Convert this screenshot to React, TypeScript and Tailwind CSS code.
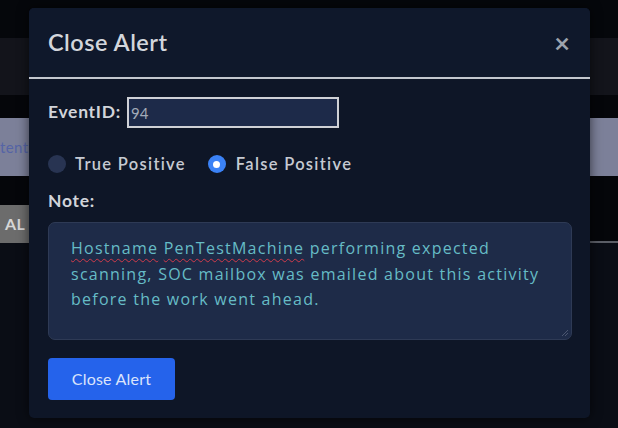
import { useState } from 'react';

// Backdrop strips peek out on both sides of the dialog
function Backdrop() {
  return (
    <div className="flex flex-col h-full">
      <div className="h-[38px] bg-[#05070b]" />
      <div className="h-[57px] bg-[#13141b]" />
      <div className="h-[23px] bg-[#05060a]" />
      <div className="h-[58px] bg-[#7c8099] flex items-center">
        <span className="text-[15px] text-[#5564a6] tracking-wide">tent</span>
      </div>
      <div className="h-[29px] bg-[#05060a]" />
      <div className="h-[38px] flex">
        <div className="w-[60px] bg-[#6c6c6c] flex items-center pl-[5px]">
          <span className="text-[16px] font-bold text-[#d6d6d6] tracking-wide">AL</span>
        </div>
        <div className="flex-1 bg-[#05060a] border-b-2 border-[#5b5e66]" />
      </div>
      <div className="flex-1 bg-[#0a0d15]" />
    </div>
  );
}

const squiggle = 'underline decoration-wavy decoration-[#d13b4b] decoration-1 underline-offset-[4px]';

export default function App() {
  const [verdict, setVerdict] = useState<'tp' | 'fp'>('fp');

  return (
    <div className="relative w-[618px] h-[428px] overflow-hidden bg-[#05070b] font-['Lato','Noto_Sans',sans-serif]">
      <Backdrop />

      <div className="absolute left-[29px] top-[8px] w-[561px] h-[410px] rounded-[5px] bg-[#0e1627] shadow-[0_0_12px_rgba(0,0,0,0.6)] flex flex-col">
        <div className="h-[69px] flex items-center justify-between pl-[19px] pr-[20px] bg-[#0f182b] rounded-t-[5px]">
          <h2 className="text-[23.5px] font-semibold text-[#d3d6dc] tracking-[0.5px]">Close Alert</h2>
          <button className="text-[27px] leading-none font-bold text-[#9da3ad]">×</button>
        </div>
        <div className="h-[2px] bg-[#c3c7cf]" />

        <div className="flex flex-col pl-[19px] pr-[18px] pt-[18px]">
          <div className="flex items-center gap-[6px]">
            <label htmlFor="eventid" className="text-[17.5px] font-bold text-[#d1d4da] tracking-[0.7px]">EventID:</label>
            <input
              id="eventid"
              defaultValue="94"
              className="w-[212px] h-[31px] bg-[#1d2a49] border-2 border-[#cfd1d6] px-[2px] text-[15px] text-[#a3aab8] outline-none"
            />
          </div>

          <div className="flex items-center mt-[24px] h-[24px]">
            <button onClick={() => setVerdict('tp')} className="flex items-center">
              <span className={`w-[18px] h-[18px] rounded-full flex items-center justify-center ${verdict === 'tp' ? 'bg-[#3b82f6]' : 'bg-[#283452]'}`}>
                {verdict === 'tp' && <span className="w-[7px] h-[7px] rounded-full bg-white" />}
              </span>
              <span className="ml-[9px] text-[16.5px] font-semibold text-[#c6cad2] tracking-[1.3px]">True Positive</span>
            </button>
            <button onClick={() => setVerdict('fp')} className="flex items-center ml-[22px]">
              <span className={`w-[18px] h-[18px] rounded-full flex items-center justify-center ${verdict === 'fp' ? 'bg-[#3b82f6]' : 'bg-[#283452]'}`}>
                {verdict === 'fp' && <span className="w-[7px] h-[7px] rounded-full bg-white" />}
              </span>
              <span className="ml-[10px] text-[16.5px] font-semibold text-[#c6cad2] tracking-[1.3px]">False Positive</span>
            </button>
          </div>

          <div className="mt-[12px] text-[17.5px] font-bold text-[#d1d4da] tracking-[0.7px]">Note:</div>

          <div className="relative mt-[8px] h-[118px] rounded-[7px] bg-[#1e2b48] border border-[#2e3a55] pl-[22px] pr-[12px] pt-[13px]">
            <p className="font-['Open_Sans','Lato',sans-serif] text-[16px] leading-[25.5px] text-[#66bcc6] tracking-[1.25px] whitespace-nowrap">
              <span className={squiggle}>Hostname</span> <span className={squiggle}>PenTestMachine</span> performing expected
              <br />
              scanning, SOC mailbox was emailed about this activity
              <br />
              before the work went ahead.
            </p>
            <svg className="absolute right-[2px] bottom-[2px]" width="9" height="9" viewBox="0 0 9 9">
              <path d="M8 2L2 8M8 5L5 8" stroke="#4b5670" strokeWidth="1" />
            </svg>
          </div>

          <button className="mt-[18px] w-[127px] h-[42px] rounded-[4px] bg-[#2563eb] text-[16px] text-[#dbe4fb] tracking-[0.2px]">
            Close Alert
          </button>
        </div>
      </div>
    </div>
  );
}
